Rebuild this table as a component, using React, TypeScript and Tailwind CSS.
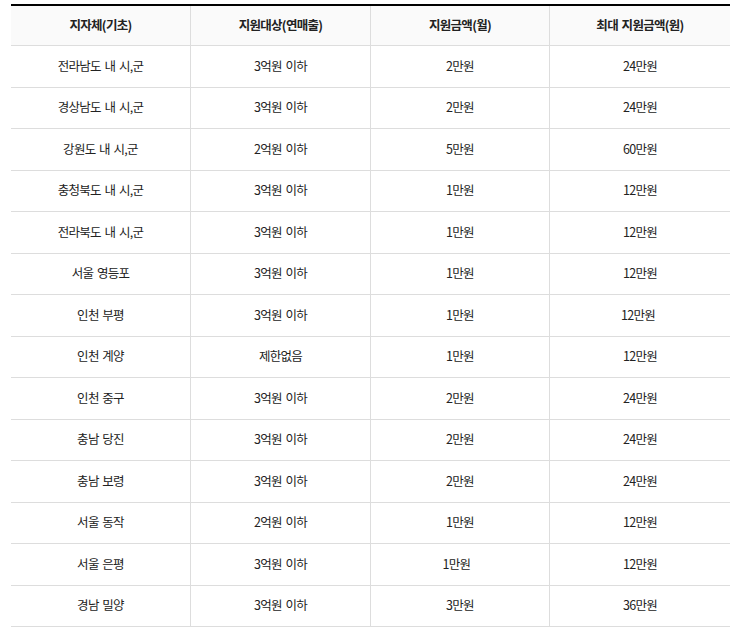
const rows: [string, string, string, string, string?][] = [
  ['전라남도 내 시,군', '3억원 이하', '2만원', '24만원'],
  ['경상남도 내 시,군', '3억원 이하', '2만원', '24만원'],
  ['강원도 내 시,군', '2억원 이하', '5만원', '60만원'],
  ['충청북도 내 시,군', '3억원 이하', '1만원', '12만원'],
  ['전라북도 내 시,군', '3억원 이하', '1만원', '12만원'],
  ['서울 영등포', '3억원 이하', '1만원', '12만원'],
  ['인천 부평', '3억원 이하', '1만원', '12만원', 'max'],
  ['인천 계양', '제한없음', '1만원', '12만원'],
  ['인천 중구', '3억원 이하', '2만원', '24만원'],
  ['충남 당진', '3억원 이하', '2만원', '24만원'],
  ['충남 보령', '3억원 이하', '2만원', '24만원'],
  ['서울 동작', '2억원 이하', '1만원', '12만원'],
  ['서울 은평', '3억원 이하', '1만원', '12만원', 'amount'],
  ['경남 밀양', '3억원 이하', '3만원', '36만원'],
]

const headers = ['지자체(기초)', '지원대상(연매출)', '지원금액(월)', '최대 지원금액(원)']

export default function App() {
  return (
    <div
      className="bg-white w-[746px] h-[632px] pt-[4px] pl-[11px] text-[#222] text-[12.5px] tracking-[-0.7px] [word-spacing:1.5px]"
      style={{ fontFamily: '"Noto Sans CJK KR", "Noto Sans", sans-serif' }}
    >
      <div className="w-[719px] border-t-2 border-black">
        {/* header */}
        <div className="grid grid-cols-[179px_180px_179px_181px] h-[40px] bg-[#fafafa] border-b border-[#dddddd] font-bold">
          {headers.map((h, i) => (
            <div
              key={h}
              className={`flex items-center justify-center ${i > 0 ? 'border-l border-[#dddddd]' : ''}`}
            >
              {h}
            </div>
          ))}
        </div>

        {rows.map(([area, target, amount, max, shift]) => (
          <div
            key={area}
            className="grid grid-cols-[179px_180px_179px_181px] h-[41.5px] border-b border-[#dddddd]"
          >
            <div className="flex items-center justify-center">{area}</div>
            <div className="flex items-center justify-center border-l border-[#dddddd]">{target}</div>
            <div
              className={`flex items-center justify-center border-l border-[#dddddd] ${shift === 'amount' ? 'pr-[7px]' : ''}`}
            >
              {amount}
            </div>
            <div
              className={`flex items-center justify-center border-l border-[#dddddd] ${shift === 'max' ? 'pr-[4px]' : ''}`}
            >
              {max}
            </div>
          </div>
        ))}
      </div>
    </div>
  )
}
